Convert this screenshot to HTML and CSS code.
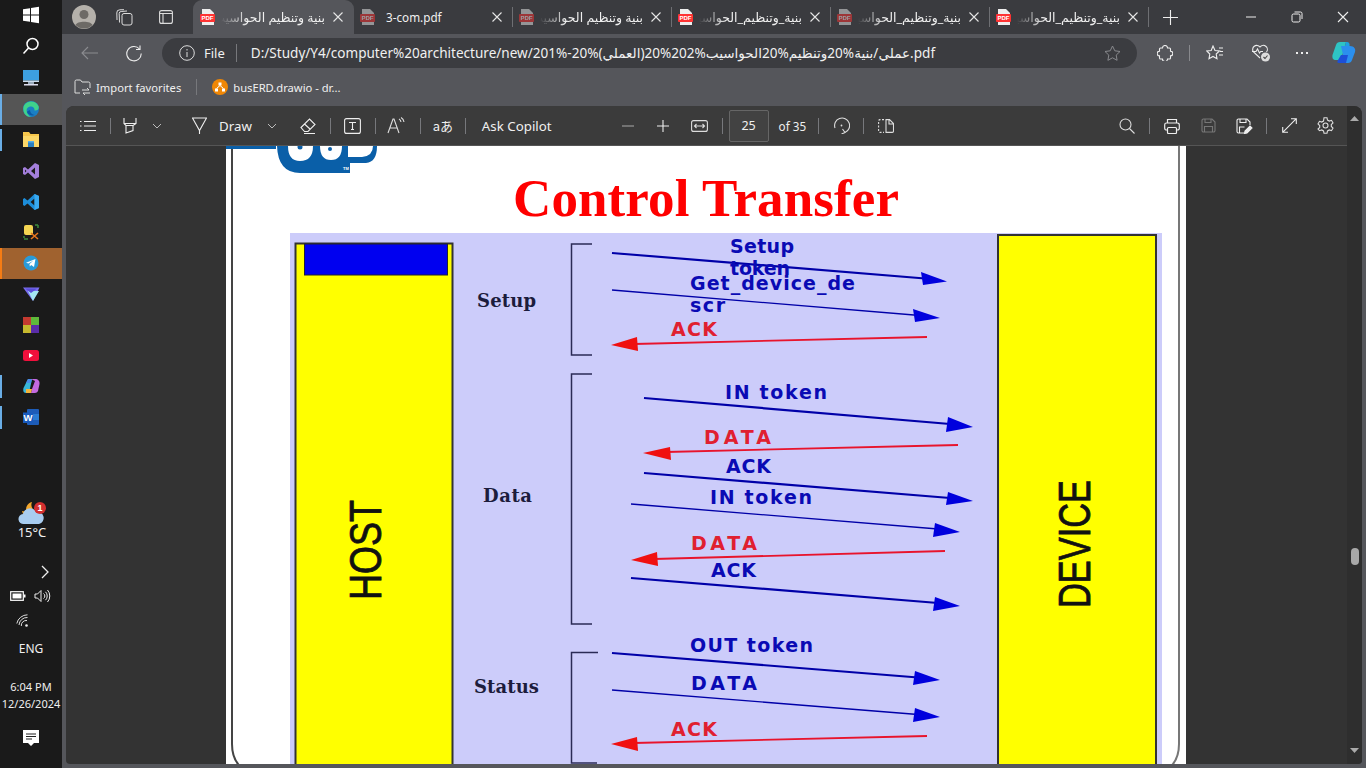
FILE: index.html
```html
<!DOCTYPE html>
<html lang="en">

<head>
  <meta charset="UTF-8">
  <meta name="viewport" content="width=device-width, initial-scale=1.0">
  <title>PDF viewer</title>
  <link rel="stylesheet" href="styles.css">
</head>

<body>
  <svg class="defs" width="0" height="0">
    <defs>
      <symbol id="pdf" viewBox="0 0 15 16">
        <path d="M2 0h8l4 4v12H2z" fill="#eee" />
        <rect x="0" y="5" width="15" height="8" rx="1" fill="#f33" />
        <text x="7.5" y="11.4" text-anchor="middle" class="pdf-word">PDF</text>
      </symbol>
      <symbol id="close" viewBox="0 0 12 12">
        <path d="M1.5 1.5l9 9M10.5 1.5l-9 9" fill="none" stroke="currentColor" stroke-width="1.1" />
      </symbol>
      <symbol id="chev" viewBox="0 0 10 6">
        <path d="M1 1l4 4 4-4" fill="none" stroke="currentColor" stroke-width="1" />
      </symbol>
    </defs>
  </svg>

  <aside class="taskbar">
    <div class="task-item"><svg width="18" height="18" viewBox="0 0 18 18"><path fill="#fff" d="M1 3.2l7-1v6.3H1zM9 2l8-1.2v7.7H9zM1 9.500h7v6.300l-7-1zM9 9.500h8v7.700l-8-1.200z" /></svg></div>
    <div class="task-item"><svg width="18" height="18" viewBox="0 0 18 18" fill="none" stroke="#fff" stroke-width="1.5"><circle cx="10.500" cy="7" r="5.500" /><path d="M6.500 11L1.500 16.500" /></svg></div>
    <div class="task-item task-gap"><svg width="18" height="16" viewBox="0 0 18 16"><rect x="1" y="0" width="16" height="10.500" fill="#3d9fe0" /><rect x="1" y="10.500" width="16" height="1.500" fill="#cde" /><rect x="6" y="12" width="6" height="2" fill="#9ab" /><rect x="2" y="14" width="14" height="1.500" fill="#dde" /></svg></div>
    <div class="task-item on-open"><svg width="18" height="18" viewBox="0 0 18 18"><circle cx="9" cy="9" r="8" fill="#1b7fc4" /><path d="M1.500 7C3 1 13-1 16.500 6c1 3-1 5-4 4.500C13 7 9 5 5.500 8 3.500 10 5 15 9 17c-5 0-8.500-4-7.500-10z" fill="#3fd28b" /><path d="M5 12c1 3 5 4 8 3-3-.5-5-2-5-5-1 .5-2.500 1-3 2z" fill="#0c5aa6" /></svg></div>
    <div class="task-item has-dot"><svg width="17" height="17" viewBox="0 0 17 17"><path d="M0 1h6l1.500 2H16v4H0z" fill="#f6c64b" /><rect x="0" y="5" width="16" height="11" fill="#fbd768" /><rect x="5" y="10" width="6" height="6" fill="#2a7fc0" /><rect x="5" y="10" width="6" height="1.500" fill="#56b0e8" /></svg></div>
    <div class="task-item"><svg width="16" height="16" viewBox="0 0 16 16"><path d="M12 0l4 2v12l-4 2L5 9.500 2 12l-2-1V5l2-1 3 2.500zM12 4.500L8 8l4 3.500zM2 6.500v3L3.500 8z" fill="#a47fdc" /></svg></div>
    <div class="task-item"><svg width="16" height="16" viewBox="0 0 16 16"><path d="M11.500 0L16 2v12l-4.500 2L4.500 9.500 1.500 12 0 11V5l1.500-1 3 2.500zM11.500 4.500L7.500 8l4 3.500z" fill="#1c8cd8" /><path d="M11.500 0L16 2v12l-4.500 2z" fill="#39a9f0" /></svg></div>
    <div class="task-item"><svg width="16" height="16" viewBox="0 0 16 16" fill="none"><rect x="1" y="1" width="9" height="10" rx="2" fill="#f4d552" /><path d="M1 14V12M1 15h4M15 1h-3M15 1v3" stroke="#3d8a3d" stroke-width="1.500" /><path d="M8 9l7 6M15 9l-7 6" stroke="#e8761e" stroke-width="1.600" /></svg></div>
    <div class="task-item on-run"><svg width="16" height="16" viewBox="0 0 16 16"><circle cx="8" cy="8" r="7.500" fill="#2a9bd8" /><path d="M3 7.800l9.500-3.800-1.500 8-2.800-2-1.400 1.400-.3-2.400 4-3.500-5 3z" fill="#fff" /></svg></div>
    <div class="task-item"><svg width="17" height="16" viewBox="0 0 17 16"><path d="M0 1.500h16.500L10 15z" fill="#7a6df0" /><path d="M5 5h11L10 15z" fill="#a4e6f2" /><path d="M2 2.500h12L8 7z" fill="#5a4fd8" /></svg></div>
    <div class="task-item"><svg width="16" height="16" viewBox="0 0 16 16"><rect x="0" y="0" width="8" height="8" fill="#c43a30" /><rect x="8" y="0" width="8" height="8" fill="#5fb83a" /><rect x="0" y="8" width="8" height="8" fill="#c6b92e" /><rect x="8" y="8" width="8" height="8" fill="#5a2ca8" /></svg></div>
    <div class="task-item"><svg width="16" height="12" viewBox="0 0 16 12"><rect width="16" height="11" rx="2.500" fill="#f0103c" /><path d="M6 3l4 2.500L6 8z" fill="#fff" /></svg></div>
    <div class="task-item has-dot"><svg width="17" height="16" viewBox="0 0 17 16"><path d="M5 1h4L6 15H3C0 15 0 12 .5 10z" fill="#38b6d8" /><path d="M5 1h4l-1 4H3z" fill="#4a8be8" /><path d="M8 1h4c3 0 5 2 4.500 5L15 13c-1 2-3 2-4 2H8l1-4 3-8z" fill="#c46ae0" /><path d="M3 11h6l-1 4H3z" fill="#f4b53c" /></svg></div>
    <div class="task-item has-dot"><svg width="16" height="16" viewBox="0 0 16 16"><rect x="4" y="0" width="12" height="16" rx="1" fill="#1d5cb8" /><rect x="10" y="5" width="6" height="6" fill="#2b7cd3" /><rect x="0" y="3.500" width="10" height="10.500" fill="#185abd" /><text x="5" y="12" text-anchor="middle" class="word-w">W</text></svg></div>

    <div class="tray">
      <div class="weather">
        <svg width="28" height="24" viewBox="0 0 28 24"><path d="M9 12a7.500 7.500 0 0 1 5-11 7 7 0 0 0 3 9z" fill="#f4a72c" /><path d="M4 10l5 1-4 2z" fill="#f4a72c" /><path d="M6 23a5 5 0 0 1-1-10 7 7 0 0 1 13-2 6 6 0 0 1 3 12z" fill="#a9cdf0" /><circle cx="22" cy="7" r="6" fill="#d32f2f" /><text x="22" y="10.200" text-anchor="middle" class="badge-one">1</text></svg>
        <span class="temp">15°C</span>
      </div>
      <svg class="tray-chev" width="10" height="14" viewBox="0 0 10 14"><path d="M2 1l6 6-6 6" fill="none" stroke="#eee" stroke-width="1.300" /></svg>
      <div class="tray-row">
        <svg width="16" height="10" viewBox="0 0 16 10"><rect x=".7" y=".7" width="12.600" height="8.600" fill="none" stroke="#fff" stroke-width="1.200" /><rect x="2.500" y="2.500" width="9" height="5" fill="#fff" /><rect x="14" y="3.500" width="1.500" height="3" fill="#fff" /></svg>
        <svg width="18" height="14" viewBox="0 0 18 14" fill="none" stroke="#eee" stroke-width="1"><path d="M1 5h2.500L7 1.500v11L3.500 9H1zM9.500 4.500a3 3 0 0 1 0 5M11.500 2.800a6 6 0 0 1 0 8.400M13.500 1a9 9 0 0 1 0 12" /></svg>
      </div>
      <svg class="tray-wifi" width="14" height="14" viewBox="0 0 14 14" fill="none" stroke="#ddd" stroke-width="1"><path d="M.8 9.500A11 11 0 0 1 11.500.8M3 11a8 8 0 0 1 8.500-7.500M5.300 12A5 5 0 0 1 11 6.500" /><circle cx="10.500" cy="11.500" r="1.300" fill="#eee" stroke="none" /></svg>
      <span class="lang">ENG</span>
      <div class="clock">
        <span>6:04 PM</span>
        <span>12/26/2024</span>
      </div>
      <svg class="notif" width="16" height="17" viewBox="0 0 16 17"><path d="M0 0h16v13h-5l-3 3-3-3H0z" fill="#fff" /><path d="M3 4h10M3 6.500h10M3 9h6" stroke="#222" stroke-width="1" /></svg>
    </div>
  </aside>

  <main class="browser">
    <div class="tabstrip">
      <svg class="avatar" width="24" height="24" viewBox="0 0 24 24"><circle cx="12" cy="12" r="12" fill="#b5b1ab" /><circle cx="12" cy="9.500" r="4.500" fill="#6d6a66" /><path d="M3.500 20c1.500-4.500 15.500-4.500 17 0a12 12 0 0 1-17 0z" fill="#6d6a66" /></svg>
      <div class="strip-btn strip-collect"><svg width="17" height="17" viewBox="0 0 17 17" fill="none" stroke="#ddd" stroke-width="1"><rect x="6" y="4.500" width="10" height="11.500" rx="2" /><path d="M3.500 13.500l-.3-9a2 2 0 0 1 2-2L11 2M1 11l-.2-7a3 3 0 0 1 3-3.200L8 .7" /></svg></div>
      <div class="strip-btn"><svg width="14" height="14" viewBox="0 0 14 14" fill="none" stroke="#ddd" stroke-width="1.100"><rect x=".6" y=".6" width="12.800" height="12.800" rx="2" /><path d="M.6 3.500h12.800M4 3.500v9.900" /></svg></div>

      <div class="tab tab-active">
        <svg class="tab-icon" width="15" height="16"><use href="#pdf" /></svg>
        <span class="tab-title" dir="rtl">بنية وتنظيم الحواسيب</span>
        <svg class="tab-close" width="12" height="12"><use href="#close" /></svg>
      </div>
      <div class="tab">
        <svg class="tab-icon dim" width="15" height="16"><use href="#pdf" /></svg>
        <span class="tab-title tab-plain">3-com.pdf</span>
        <svg class="tab-close" width="12" height="12"><use href="#close" /></svg>
      </div>
      <div class="tab">
        <svg class="tab-icon dim" width="15" height="16"><use href="#pdf" /></svg>
        <span class="tab-title" dir="rtl">بنية وتنظيم الحواسيب</span>
        <svg class="tab-close" width="12" height="12"><use href="#close" /></svg>
      </div>
      <div class="tab">
        <svg class="tab-icon" width="15" height="16"><use href="#pdf" /></svg>
        <span class="tab-title" dir="rtl">بنية_وتنظيم_الحواسيب</span>
        <svg class="tab-close" width="12" height="12"><use href="#close" /></svg>
      </div>
      <div class="tab">
        <svg class="tab-icon dim" width="15" height="16"><use href="#pdf" /></svg>
        <span class="tab-title" dir="rtl">بنية_وتنظيم_الحواسيب</span>
        <svg class="tab-close" width="12" height="12"><use href="#close" /></svg>
      </div>
      <div class="tab">
        <svg class="tab-icon" width="15" height="16"><use href="#pdf" /></svg>
        <span class="tab-title" dir="rtl">بنية_وتنظيم_الحواسيب</span>
        <svg class="tab-close" width="12" height="12"><use href="#close" /></svg>
      </div>
      <svg class="new-tab" width="15" height="15" viewBox="0 0 15 15"><path d="M7.500 0v15M0 7.500h15" stroke="#eee" stroke-width="1.100" /></svg>
      <div class="win-btns">
        <svg width="12" height="12" viewBox="0 0 12 12"><path d="M1 6h10" stroke="#eee" stroke-width="1" /></svg>
        <svg width="12" height="12" viewBox="0 0 12 12" fill="none" stroke="#eee" stroke-width="1"><rect x="1" y="3" width="8" height="8" rx="1.500" /><path d="M3.500 1H9.500a1.500 1.500 0 0 1 1.500 1.500V8" /></svg>
        <svg width="12" height="12" viewBox="0 0 12 12"><path d="M1 1l10 10M11 1L1 11" stroke="#eee" stroke-width="1.100" /></svg>
      </div>
    </div>

    <div class="navbar">
      <svg class="nav-back" width="18" height="14" viewBox="0 0 18 14" fill="none" stroke="#8b8c90" stroke-width="1.100"><path d="M17 7H1M7 1L1 7l6 6" /></svg>
      <svg class="nav-reload" width="17" height="17" viewBox="0 0 17 17" fill="none" stroke="#eee" stroke-width="1.100"><path d="M14.500 4a7.200 7.200 0 1 0 1.700 4.500" /><path d="M15 .5v4h-4" /></svg>
      <div class="addr">
        <svg width="16" height="16" viewBox="0 0 16 16" fill="none" stroke="#ddd" stroke-width="1"><circle cx="8" cy="8" r="7.300" /><path d="M8 7v5M8 4v1.500" /></svg>
        <span class="addr-file">File</span>
        <span class="addr-sep"></span>
        <span class="addr-url">D:/Study/Y4/computer%20architecture/new/201%-20%(<bdi>العملي</bdi>)20%202%<bdi>الحواسيب</bdi>20%<bdi>وتنظيم</bdi>20%<bdi>بنية</bdi>/<bdi>عملي</bdi>.pdf</span>
        <svg class="addr-star" width="17" height="16" viewBox="0 0 17 16" fill="none" stroke="#88898d" stroke-width="1"><path d="M8.500 1l2.300 4.800 5.200.7-3.800 3.600.9 5.200-4.600-2.500-4.600 2.500.9-5.200L1 6.500l5.200-.7z" /></svg>
      </div>
      <svg class="nav-ext" width="16" height="16" viewBox="0 0 16 16" fill="none" stroke="#eee" stroke-width="1.100"><path d="M5.500 3a2.500 2.500 0 0 1 5 0h2a1 1 0 0 1 1 1v2.200a2.300 2.300 0 0 1 0 4.600V13a1 1 0 0 1-1 1h-2a2.500 2.500 0 0 1-5 0h-2a1 1 0 0 1-1-1v-2.200a2.300 2.300 0 0 1 0-4.600V4a1 1 0 0 1 1-1z" /></svg>
      <span class="nav-sep"></span>
      <svg class="nav-fav" width="18" height="16" viewBox="0 0 18 16" fill="none" stroke="#eee" stroke-width="1.100"><path d="M7 1l2 4.500 4.500.5-3.300 3 .8 4.800-4-2.300-4 2.300.8-4.800L.7 6l4.500-.5zM13 3h4M14 6.500h3M13 10h4" /></svg>
      <svg class="nav-health" width="20" height="20" viewBox="0 0 20 20" fill="none" stroke="#eee" stroke-width="1.100"><path d="M9 15L2.500 9a4 4 0 0 1 6.500-5 4 4 0 0 1 6.500 5M1 8.500h4l1.500-2.500 2 4 1.200-1.500H12" /><circle cx="14.500" cy="14" r="4.500" fill="#ddd" stroke="none" /><path d="M12.500 14l1.500 1.500 2.500-3" stroke="#444" /></svg>
      <div class="nav-dots"><i></i><i></i><i></i></div>
      <svg class="nav-copilot" width="24" height="24" viewBox="0 0 24 24"><path d="M8 1h6l-5 18H4c-3 0-4-2-3.500-5L4 4c.5-2 2-3 4-3z" fill="#2ec4c4" /><path d="M9 5h9c4 0 6 3 5 6l-3 8c-.5 2-2 3-4 3h-7l2-8z" fill="#2b8fee" /><path d="M9 14h7l-2 8H7c-2 0-2-1-1-3z" fill="#1d4fd8" /><path d="M14 1h1c2 0 3 2 2.500 4H13z" fill="#1da0e0" /></svg>
    </div>

    <div class="favbar">
      <svg width="17" height="16" viewBox="0 0 17 16" fill="none" stroke="#ddd" stroke-width="1"><path d="M1 14V2.500A1.500 1.500 0 0 1 2.500 1h4l1.500 2h6.500A1.500 1.500 0 0 1 16 4.500V9M1 14h5M8 11h7l-2-2M16 14H9l2 2" /></svg>
      <span class="fav-text">Import favorites</span>
      <span class="fav-sep"></span>
      <svg width="16" height="16" viewBox="0 0 16 16"><circle cx="8" cy="8" r="8" fill="#f08705" /><path d="M6.500 3.500h3v3h-3zM3 9.500h3v3H3zM10 9.500h3v3h-3z" fill="#fff" /><path d="M8 6.500L4.500 9.500M8 6.500l3.500 3" stroke="#fff" stroke-width="1" /></svg>
      <span class="fav-text">busERD.drawio - dr...</span>
    </div>

    <div class="viewer">
      <div class="viewer-main">
        <div class="pdfbar">
          <div class="btn"><svg width="16" height="12" viewBox="0 0 16 12" fill="none" stroke="#eee" stroke-width="1"><path d="M4 1.500h12M4 6h12M4 10.500h12M0 1.500h1.500M0 6h1.500M0 10.500h1.500" /></svg></div>
          <span class="sep"></span>
          <div class="btn btn-hl"><svg width="15" height="18" viewBox="0 0 15 18" fill="none" stroke="#eee" stroke-width="1.100"><path d="M1 1v5.500l2 2v7.500l7-2.500V8.500l3-2V1M1 6.500h12M3 8.500h7" /></svg></div>
          <div class="btn-chev"><svg width="10" height="6"><use href="#chev" /></svg></div>
          <div class="btn btn-draw"><svg width="17" height="18" viewBox="0 0 17 18" fill="none" stroke="#eee" stroke-width="1.100"><path d="M1 1h15M1.500 1l7 12.500L15.500 1M8.500 13.500V17" /></svg></div>
          <span class="bar-text draw-word">Draw</span>
          <div class="btn-chev draw-chev"><svg width="10" height="6"><use href="#chev" /></svg></div>
          <div class="btn btn-erase"><svg width="16" height="16" viewBox="0 0 16 16" fill="none" stroke="#eee" stroke-width="1.100"><path d="M1 9.500L9.500 1 15 6.500 8 13.500H4.500zM4.500 6L10.500 11.500M4 15.500h11" /></svg></div>
          <span class="sep"></span>
          <div class="btn"><svg width="17" height="16" viewBox="0 0 17 16" fill="none" stroke="#eee" stroke-width="1.100"><rect x=".6" y=".6" width="15.800" height="14.800" rx="2" /><path d="M5 4.500h7M8.500 4.500v7M7 11.500h3" /></svg></div>
          <span class="sep"></span>
          <div class="btn btn-read"><svg width="18" height="17" viewBox="0 0 18 17" fill="none" stroke="#ddd" stroke-width="1.100"><path d="M1 16L6 2h1l5 14M3 11h7M12 2a4 4 0 0 1 2 3M14 .5a6 6 0 0 1 3 4.500" /></svg></div>
          <span class="sep"></span>
          <div class="btn"><span class="translate">aあ</span></div>
          <span class="sep"></span>
          <span class="bar-text ask">Ask Copilot</span>
          <div class="btn btn-minus"><svg width="12" height="2" viewBox="0 0 12 2"><path d="M0 1h12" stroke="#aaa" stroke-width="1.100" /></svg></div>
          <div class="btn btn-plus"><svg width="12" height="12" viewBox="0 0 12 12"><path d="M6 0v12M0 6h12" stroke="#eee" stroke-width="1.100" /></svg></div>
          <div class="btn btn-fit"><svg width="17" height="12" viewBox="0 0 17 12" fill="none" stroke="#ddd" stroke-width="1.100"><rect x=".6" y=".6" width="15.800" height="10.800" rx="2" /><path d="M3.500 6h10M5.500 4l-2 2 2 2M11.500 4l2 2-2 2" /></svg></div>
          <span class="sep"></span>
          <div class="page-box">25</div>
          <span class="bar-text page-of">of 35</span>
          <span class="sep sep-of"></span>
          <div class="btn"><svg width="17" height="17" viewBox="0 0 17 17" fill="none" stroke="#ddd" stroke-width="1.100"><path d="M2 11A7.500 7.500 0 1 1 12 15.500M9.500 12l2.500 3.500-3.500 1.500" /><circle cx="8.500" cy="8.500" r=".9" fill="#ddd" stroke="none" /></svg></div>
          <span class="sep"></span>
          <div class="btn"><svg width="16" height="14" viewBox="0 0 16 14" fill="none" stroke="#ddd" stroke-width="1.100"><path stroke-dasharray="2 1.500" d="M6 .6H2A1.500 1.500 0 0 0 .6 2v10A1.500 1.500 0 0 0 2 13.400h4" /><path d="M8 .6h3.500l4 4V12a1.500 1.500 0 0 1-1.500 1.400H8zM11 1v4h4" /></svg></div>
          <div class="btn btn-search"><svg width="16" height="16" viewBox="0 0 16 16" fill="none" stroke="#ddd" stroke-width="1.100"><circle cx="6.500" cy="6.500" r="5.500" /><path d="M10.500 10.500l5 5" /></svg></div>
          <span class="sep"></span>
          <div class="btn"><svg width="16" height="16" viewBox="0 0 16 16" fill="none" stroke="#eee" stroke-width="1.200"><path d="M3.500 5V1.500h9V5M3.500 12H2.500A1.800 1.800 0 0 1 .7 10.200V6.800A1.800 1.800 0 0 1 2.500 5h11a1.800 1.800 0 0 1 1.800 1.800v3.400a1.800 1.800 0 0 1-1.800 1.800h-1" /><rect x="3.500" y="9.500" width="9" height="6" rx="1" /></svg></div>
          <div class="btn"><svg width="15" height="15" viewBox="0 0 15 15" fill="none" stroke="#777" stroke-width="1.100"><path d="M1 2.500A1.500 1.500 0 0 1 2.500 1H11l3 3v8.500a1.500 1.500 0 0 1-1.500 1.500h-10A1.500 1.500 0 0 1 1 12.500zM4 1v3.500h6V1M3.500 14V8.500h8V14" /></svg></div>
          <div class="btn"><svg width="17" height="16" viewBox="0 0 17 16" fill="none" stroke="#eee" stroke-width="1.100"><path d="M8 15H2.500A1.500 1.500 0 0 1 1 13.500v-11A1.500 1.500 0 0 1 2.500 1H11l3 3v3M4 1v3.500h6V1M3.500 15V9h5" /><path d="M8.500 15.500l.5-2.500 5-5 2 2-5 5z" fill="#eee" /></svg></div>
          <span class="sep"></span>
          <div class="btn"><svg width="15" height="15" viewBox="0 0 15 15" fill="none" stroke="#eee" stroke-width="1.100"><path d="M9 .7h5.300V6M14.300.7L.7 14.300M.7 9v5.300H6" /></svg></div>
          <div class="btn"><svg width="17" height="17" viewBox="0 0 17 17" fill="none" stroke="#ddd" stroke-width="1.100"><path d="M7 .8h3l.5 2.300 1.800 1 2.200-.8 1.500 2.600-1.700 1.600v2l1.700 1.600-1.500 2.600-2.200-.8-1.800 1-.5 2.300H7l-.5-2.300-1.800-1-2.200.8L1 12.100l1.700-1.600v-2L1 6.900l1.500-2.600 2.200.8 1.800-1z" /><circle cx="8.500" cy="8.500" r="2.500" /></svg></div>
        </div>

        <div class="doc-area">
          <div class="page">
            <svg class="slide" width="960" height="618" viewBox="226 146 960 618">
              <path class="slide-edge slide-left" d="M232 146V744Q232 760 242 768" />
              <path class="slide-edge slide-right" d="M1179 146V744Q1179 760 1169 768" />
              <rect x="226" y="146" width="50" height="3" fill="#0a5fa8" />
              <path d="M277 146Q278 173 300 173H350V163H366Q377 162 377 146z" fill="#0a5fa8" />
              <path d="M288 146Q288 161 300 161Q313 161 313 146zM320 146Q320 160 331 160Q342 160 342 146zM348 146V157H362Q373 156 373 146z" fill="#fff" />
              <circle cx="300" cy="147" r="2.500" fill="#0a5fa8" />
              <circle cx="330" cy="149" r="2" fill="#0a5fa8" />
              <text x="343" y="170" class="tm">TM</text>

              <text x="513" y="216" class="slide-title" textLength="386">Control Transfer</text>

              <rect x="290" y="233" width="872" height="531" fill="#ccccfa" />
              <rect x="295.500" y="243.500" width="157" height="530" class="box" />
              <rect x="304.500" y="244" width="143" height="31" fill="#0000f0" stroke="#223" />
              <rect x="998" y="235" width="158" height="540" class="box" />
              <text transform="translate(381 600) rotate(-90)" class="side" textLength="100" lengthAdjust="spacingAndGlyphs">HOST</text>
              <text transform="translate(1090 608) rotate(-90)" class="side" textLength="128" lengthAdjust="spacingAndGlyphs">DEVICE</text>

              <path class="bracket" d="M592 244H571.500V355H592M592 374H571.500V624H592M598 652.500H571.500V763H597" />

              <text x="477" y="307" class="phase" textLength="59">Setup</text>
              <text x="483" y="502" class="phase" textLength="49">Data</text>
              <text x="474" y="693" class="phase" textLength="65">Status</text>

              <g class="line-blue">
                <path d="M612 253L925 278.500" />
                <path class="thin" d="M612 290L920 315.500" />
                <path d="M644 398L950 424" />
                <path d="M644 473L950 498" />
                <path class="thin" d="M631 504L938 529" />
                <path d="M631 578L938 603" />
                <path d="M612 653L918 677.500" />
                <path class="thin" d="M612 690L918 714.500" />
              </g>
              <g fill="#0000dd">
                <path d="M947 281.500L921 272L923 285z" />
                <path d="M940 318L913 309L915 322z" />
                <path d="M973 427L948 417L946 432z" />
                <path d="M973 501L948 492L946 505z" />
                <path d="M960 532L935 523L933 537z" />
                <path d="M960 606L935 597L933 611z" />
                <path d="M940 680L915 671L913 685z" />
                <path d="M940 717L915 708L913 722z" />
              </g>
              <g class="line-red">
                <path d="M634 344L927 337" />
                <path d="M666 452L958 445" />
                <path d="M654 559L945 551" />
                <path d="M634 743L927 736" />
              </g>
              <g fill="#f01010">
                <path d="M611 345L637 337L638 351z" />
                <path d="M643 453L670 447L671 460z" />
                <path d="M631 560L657 552L658 566z" />
                <path d="M611 744L637 737L638 751z" />
              </g>

              <g class="label-blue">
                <text x="730" y="253" textLength="64">Setup</text>
                <text x="730" y="275" textLength="60">token</text>
                <text x="690" y="290" textLength="165">Get_device_de</text>
                <text x="690" y="312" textLength="35">scr</text>
                <text x="725" y="399" textLength="102">IN token</text>
                <text x="726" y="473" textLength="45">ACK</text>
                <text x="710" y="504" textLength="102">IN token</text>
                <text x="711" y="577" textLength="45">ACK</text>
                <text x="690" y="652" textLength="123">OUT token</text>
                <text x="691" y="690" textLength="66">DATA</text>
              </g>
              <g class="label-red">
                <text x="671" y="336" textLength="46">ACK</text>
                <text x="704" y="444" textLength="67">DATA</text>
                <text x="691" y="550" textLength="66">DATA</text>
                <text x="671" y="736" textLength="46">ACK</text>
              </g>
            </svg>
          </div>
        </div>
      </div>

      <div class="scrollbar">
        <svg class="scroll-up" width="9" height="5" viewBox="0 0 9 5"><path d="M4.500 0L9 5H0z" fill="#aaa" /></svg>
        <span class="scroll-thumb"></span>
        <svg class="scroll-down" width="9" height="5" viewBox="0 0 9 5"><path d="M0 0h9L4.500 5z" fill="#aaa" /></svg>
      </div>
    </div>
  </main>
</body>

</html>
```

FILE: styles.css
```css
* {
  box-sizing: border-box;
}

html,
body {
  margin: 0;
  height: 100%;
}

body {
  display: flex;
  width: 1366px;
  height: 768px;
  overflow: hidden;
  font-family: "Noto Sans", "DejaVu Sans", sans-serif;
  font-size: 13px;
  color: #f0f0f0;
  background-color: #55565b;
}

.defs {
  position: absolute;
}

.pdf-word {
  font-family: "Liberation Sans", sans-serif;
  font-size: 6px;
  font-weight: 700;
  fill: #fff;
}

/* taskbar */

.taskbar {
  display: flex;
  flex-direction: column;
  align-items: stretch;
  flex: 0 0 62px;
  background-color: #1a1a1a;
}

.task-item {
  position: relative;
  display: flex;
  align-items: center;
  justify-content: center;
  height: 30.800px;
  flex: none;
}

.task-gap {
  margin-top: 1.400px;
}

.on-open {
  background-color: #555;
}

.on-open::before,
.on-run::before,
.has-dot::before {
  content: "";
  position: absolute;
  left: 0;
  width: 2px;
  top: 0;
  bottom: 0;
  background-color: #6aaee6;
}

.has-dot::before {
  top: 4px;
  bottom: 4px;
}

.on-run {
  background-color: #a0622f;
}

.on-run::before {
  background-color: #f57c14;
}

.word-w {
  font-family: "Liberation Sans", sans-serif;
  font-size: 9.500px;
  font-weight: 700;
  fill: #fff;
}

.badge-one {
  font-family: "Liberation Sans", sans-serif;
  font-size: 9px;
  font-weight: 700;
  fill: #fff;
}

.tray {
  display: flex;
  flex-direction: column;
  align-items: center;
  margin-top: auto;
  padding-bottom: 21px;
}

.weather {
  display: flex;
  flex-direction: column;
  align-items: center;
  margin-left: 2px;
}

.temp {
  font-size: 13px;
  line-height: 16px;
  margin-top: -1px;
}

.tray-chev {
  align-self: flex-end;
  margin: 25px 12px 0 0;
}

.tray-row {
  display: flex;
  align-items: center;
  gap: 8px;
  margin-top: 10px;
}

.tray-wifi {
  margin: 11px 16px 0 0;
}

.lang {
  font-size: 12px;
  line-height: 16px;
  margin-top: 13px;
}

.clock {
  display: flex;
  flex-direction: column;
  align-items: center;
  font-size: 11px;
  line-height: 17px;
  margin-top: 21px;
  white-space: nowrap;
}

.notif {
  margin-top: 18px;
}

/* browser chrome */

.browser {
  display: flex;
  flex-direction: column;
  flex: 1;
  min-width: 0;
  padding: 0 4px 4px;
}

.tabstrip {
  display: flex;
  align-items: center;
  flex: 0 0 34px;
  margin: 0 -4px;
  padding-left: 10px;
  background-color: #3a3b3f;
}

.avatar {
  flex: none;
}

.strip-btn {
  display: flex;
  align-items: center;
  justify-content: center;
  width: 40px;
  height: 34px;
  margin-left: 2px;
  flex: none;
}

.strip-collect {
  margin-left: 8px;
}

.tab {
  position: relative;
  display: flex;
  align-items: center;
  flex: 0 0 159px;
  min-width: 0;
  height: 34px;
  padding: 0 10px 0 6px;
  font-size: 12.500px;
}

.tab::after {
  content: "";
  position: absolute;
  right: 0;
  top: 7px;
  bottom: 7px;
  width: 1px;
  background-color: #6e6f73;
}

.tab-active {
  flex-basis: 161px;
  margin-left: 7px;
  padding-left: 7px;
  background-color: #55565b;
  border-radius: 9px 9px 0 0;
}

.tab-active::after {
  display: none;
}

.tab-icon {
  flex: none;
}

.dim {
  opacity: 0.5;
}

.tab-title {
  flex: 1;
  min-width: 0;
  margin: 0 7px 0 6px;
  overflow: hidden;
  white-space: nowrap;
  -webkit-mask-image: linear-gradient(to right, transparent 0, #000 26px);
  mask-image: linear-gradient(to right, transparent 0, #000 26px);
}

.tab-plain {
  margin-left: 11px;
  font-size: 11.700px;
  -webkit-mask-image: none;
  mask-image: none;
}

.tab-close {
  flex: none;
  color: #e6e6e6;
}

.new-tab {
  flex: none;
  margin-left: 14px;
}

.win-btns {
  display: flex;
  align-items: center;
  gap: 34px;
  margin-left: auto;
  padding-right: 17px;
}

.navbar {
  display: flex;
  align-items: center;
  flex: 0 0 34px;
  padding-top: 4px;
  margin-left: -4px;
}

.nav-back {
  margin-left: 19px;
}

.nav-reload {
  margin-left: 26px;
}

.addr {
  display: flex;
  align-items: center;
  flex: 0 0 975px;
  height: 30px;
  margin-left: 20px;
  padding: 0 16px 0 17px;
  background-color: #3b3c40;
  border-radius: 15px;
}

.addr-file {
  margin-left: 9px;
}

.addr-sep {
  width: 1px;
  height: 18px;
  margin: 0 14px 0 11px;
  background-color: #77787c;
}

.addr-url {
  white-space: nowrap;
  font-size: 13.550px;
}

.addr-star {
  margin-left: auto;
}

.nav-ext {
  margin-left: 20px;
}

.nav-sep {
  width: 1px;
  height: 16px;
  margin: 0 16px;
  background-color: #88898d;
}

.nav-fav {
  flex: none;
}

.nav-health {
  margin-left: 27px;
}

.nav-dots {
  display: flex;
  gap: 3px;
  margin-left: 25px;
}

.nav-dots i {
  width: 2px;
  height: 2px;
  background-color: #eee;
}

.nav-copilot {
  margin-left: 24px;
}

.favbar {
  display: flex;
  align-items: center;
  flex: 0 0 38px;
  padding-left: 8px;
  font-size: 11.200px;
}

.fav-text {
  margin-left: 5px;
  white-space: nowrap;
}

.fav-sep {
  width: 1px;
  height: 16px;
  margin: 0 15px 0 15px;
  background-color: #77787c;
}

/* pdf viewer */

.viewer {
  display: flex;
  flex: 1;
  min-height: 0;
  overflow: hidden;
  border-radius: 8px 8px 4px 4px;
  background-color: #333;
}

.viewer-main {
  display: flex;
  flex-direction: column;
  flex: 1;
  min-width: 0;
}

.pdfbar {
  display: flex;
  align-items: center;
  flex: 0 0 40px;
  padding: 0 4px;
  background-color: #3b3b3b;
  border-bottom: 1px solid #555;
}

.btn {
  display: flex;
  align-items: center;
  justify-content: center;
  flex: 0 0 36px;
  height: 30px;
}

.btn-chev {
  display: flex;
  align-items: center;
  justify-content: center;
  flex: 0 0 24px;
  color: #bbb;
}

.btn-hl {
  flex-basis: 30px;
}

.btn-draw {
  margin-left: 12px;
}

.draw-word {
  margin-left: 2px;
}

.draw-chev {
  margin-left: 8px;
}

.btn-erase {
  margin-left: 6px;
}

.btn-read {
  margin-left: -2px;
  margin-right: 2px;
}

.sep {
  flex: none;
  width: 1px;
  height: 16px;
  margin: 0 4px;
  background-color: #77787c;
}

.bar-text {
  white-space: nowrap;
  font-size: 13.300px;
}

.translate {
  font-size: 13px;
  font-family: "Noto Sans CJK JP", "Noto Sans", sans-serif;
}

.ask {
  margin-left: 12px;
}

.btn-minus {
  margin-left: 58px;
}

.btn-plus {
  margin-left: -1px;
}

.btn-fit {
  margin-left: 1px;
}

.page-box {
  display: flex;
  align-items: center;
  justify-content: center;
  flex: 0 0 40px;
  height: 32px;
  margin-left: 2px;
  border: 1px solid #666;
  border-radius: 2px;
  background-color: #424242;
  font-size: 12.500px;
}

.page-of {
  margin-left: 10px;
  font-size: 11.700px;
}

.sep-of {
  margin-left: 12px;
}

.btn-search {
  margin-left: auto;
}

.doc-area {
  display: flex;
  justify-content: center;
  flex: 1;
  min-height: 0;
  overflow: hidden;
}

.page {
  flex: 0 0 960px;
  margin-right: 1px;
  background-color: #fff;
}

.slide {
  display: block;
}

.slide-edge {
  fill: none;
  stroke-width: 2;
}

.slide-left {
  stroke: #444;
}

.slide-right {
  stroke: #777;
}

.tm {
  font-family: "Liberation Sans", sans-serif;
  font-size: 4px;
  font-weight: 700;
  fill: #fff;
}

.slide-title {
  font-family: "Liberation Serif", serif;
  font-size: 53px;
  font-weight: 700;
  fill: #ff0000;
}

.box {
  fill: #ffff00;
  stroke: #333;
  stroke-width: 2;
}

.side {
  font-family: "Liberation Sans", sans-serif;
  font-size: 44px;
  fill: #111;
  stroke: #111;
  stroke-width: 0.800;
}

.bracket {
  fill: none;
  stroke: #2a2a55;
  stroke-width: 1.500;
}

.phase {
  font-family: "DejaVu Serif", serif;
  font-size: 18px;
  font-weight: 700;
  fill: #1c1c3c;
}

.line-blue path {
  fill: none;
  stroke: #0000a8;
  stroke-width: 2.200;
}

.line-blue .thin {
  stroke-width: 1.400;
}

.line-red path {
  fill: none;
  stroke: #e8142c;
  stroke-width: 1.800;
}

.label-blue text,
.label-red text {
  font-family: "DejaVu Sans", sans-serif;
  font-size: 19px;
  font-weight: 700;
}

.label-blue text {
  fill: #0a0ab4;
}

.label-red text {
  fill: #e02030;
}

.scrollbar {
  position: relative;
  display: flex;
  flex-direction: column;
  align-items: center;
  flex: 0 0 15px;
  background-color: #2e2e2e;
}

.scroll-up {
  margin-top: 10px;
}

.scroll-thumb {
  width: 8px;
  height: 17px;
  margin-top: 427px;
  border-radius: 4px;
  background-color: #a8a8a8;
}

.scroll-down {
  margin-top: auto;
  margin-bottom: 11px;
}
```
